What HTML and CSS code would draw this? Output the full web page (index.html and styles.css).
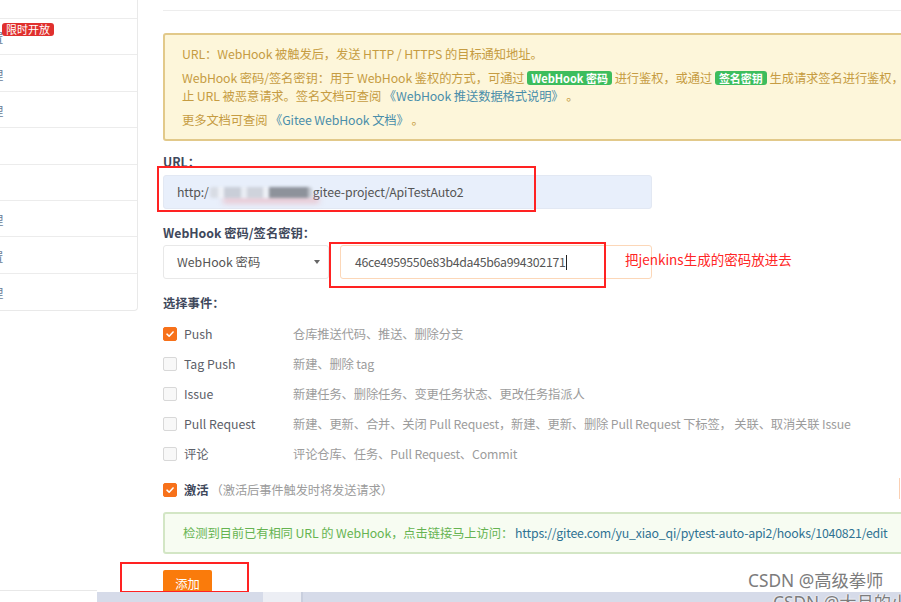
FILE: index.html
```html
<!DOCTYPE html>
<html lang="zh-CN">
<head>
<meta charset="utf-8">
<title>WebHook</title>
<link rel="stylesheet" href="styles.css">
</head>
<body>
<div class="page">
  <aside class="sidebar">
    <div class="menu-item first"></div>
    <div class="menu-item"><span class="menu-text">置</span><span class="badge">限时开放</span></div>
    <div class="menu-item"><span class="menu-text">理</span></div>
    <div class="menu-item"><span class="menu-text">理</span></div>
    <div class="menu-item"></div>
    <div class="menu-item"></div>
    <div class="menu-item"><span class="menu-text">理</span></div>
    <div class="menu-item"><span class="menu-text">置</span></div>
    <div class="menu-item last"><span class="menu-text">理</span></div>
  </aside>

  <main class="main">
    <div class="section-head"></div>

    <div class="notice">
      <p>URL：WebHook 被触发后，发送 HTTP / HTTPS 的目标通知地址。</p>
      <p>WebHook 密码/签名密钥：用于 WebHook 鉴权的方式，可通过 <span class="tag">WebHook 密码</span> 进行鉴权，或通过 <span class="tag">签名密钥</span> 生成请求签名进行鉴权，防<br>止 URL 被恶意请求。签名文档可查阅 <a class="link">《WebHook 推送数据格式说明》</a> 。</p>
      <p>更多文档可查阅 <a class="link">《Gitee WebHook 文档》</a> 。</p>
    </div>

    <div class="field-label">URL：</div>
    <div class="input url-input">http:/<span class="blurred"></span>gitee-project/ApiTestAuto2</div>

    <div class="field-label second">WebHook 密码/签名密钥：</div>
    <div class="secret-row">
      <div class="select">WebHook 密码<span class="caret"></span></div>
      <div class="input key-input">46ce4959550e83b4da45b6a994302171<span class="cursor"></span></div>
    </div>

    <div class="field-label events">选择事件：</div>
    <div class="events-list">
      <div class="event"><span class="cb checked"><svg viewBox="0 0 14 14"><path d="M3.5 7.2 L6 9.6 L10.6 4.6" fill="none" stroke="#fff" stroke-width="1.8" stroke-linecap="round" stroke-linejoin="round"/></svg></span><span class="ev-name">Push</span><span class="ev-desc">仓库推送代码、推送、删除分支</span></div>
      <div class="event"><span class="cb"></span><span class="ev-name">Tag Push</span><span class="ev-desc">新建、删除 tag</span></div>
      <div class="event"><span class="cb"></span><span class="ev-name">Issue</span><span class="ev-desc">新建任务、删除任务、变更任务状态、更改任务指派人</span></div>
      <div class="event"><span class="cb"></span><span class="ev-name">Pull Request</span><span class="ev-desc">新建、更新、合并、关闭 Pull Request，新建、更新、删除 Pull Request 下标签， 关联、取消关联 Issue</span></div>
      <div class="event"><span class="cb"></span><span class="ev-name">评论</span><span class="ev-desc">评论仓库、任务、Pull Request、Commit</span></div>
    </div>

    <div class="event activate"><span class="cb checked"><svg viewBox="0 0 14 14"><path d="M3.5 7.2 L6 9.6 L10.6 4.6" fill="none" stroke="#fff" stroke-width="1.8" stroke-linecap="round" stroke-linejoin="round"/></svg></span><span class="act-name">激活</span><span class="ev-desc act-desc">（激活后事件触发时将发送请求）</span></div>

    <div class="success">检测到目前已有相同 URL 的 WebHook，点击链接马上访问：<a class="link dark">https://gitee.com/yu_xiao_qi/pytest-auto-api2/hooks/1040821/edit</a></div>

    <button class="add-btn">添加</button>
  </main>
</div>

<div class="mark box1"></div>
<div class="mark box2"></div>
<div class="mark box3"></div>
<div class="annot">把jenkins生成的密码放进去</div>
<div class="edge-sliver"></div>

<div class="bottom-bar"><span class="bar-left"></span><span class="bar-a"></span><span class="bar-thumb"></span><span class="bar-b"></span></div>

<div class="watermark wm1">CSDN @高级拳师</div>
<div class="watermark wm2">CSDN @大月的小</div>
</body>
</html>
```
FILE: styles.css
```css
html, body {
  margin: 0;
  padding: 0;
  width: 901px;
  height: 602px;
  overflow: hidden;
  background: #fff;
}
body {
  font-family: "Noto Sans CJK SC", "Noto Sans", sans-serif;
  font-size: 12.3px;
  color: #555;
  position: relative;
}
.page {
  display: flex;
  align-items: flex-start;
  gap: 25px;
}
.sidebar {
  width: 137px;
  flex: none;
  border-right: 1px solid #e9e9e9;
  border-bottom: 1px solid #e9e9e9;
  border-bottom-right-radius: 4px;
  background: #fff;
}
.menu-item {
  position: relative;
  height: 36.4px;
  box-sizing: border-box;
  border-bottom: 1px solid #ececec;
  display: flex;
  align-items: center;
  overflow: hidden;
}
.menu-item.first { height: 19px; }
.menu-item.last { border-bottom: none; }
.menu-text {
  margin-left: -9px;
  color: #6a7d96;
  font-size: 12.3px;
  line-height: 14px;
  padding-top: 3px;
}
.badge {
  position: absolute;
  left: 2px;
  top: 4px;
  background: #e0302e;
  color: #fff;
  font-size: 11px;
  line-height: 13px;
  padding: 0 4px;
  border-radius: 3px;
}
.main {
  width: 770px;
  flex: none;
  display: flex;
  flex-direction: column;
  align-items: flex-start;
}
.section-head {
  align-self: stretch;
  height: 10px;
  border-bottom: 1px solid #ededed;
}
.notice {
  align-self: stretch;
  margin-top: 22px;
  background: #fdf6da;
  border: 2px solid #e2c98a;
  border-radius: 3px;
  padding: 10px 16px 10px 17px;
  color: #c69c42;
  height: 108px;
  box-sizing: border-box;
  letter-spacing: -0.1px;
}
.notice p {
  margin: 0 0 6px;
  line-height: 18px;
  white-space: nowrap;
}
.notice p:last-child { margin-bottom: 0; }
.tag {
  display: inline-block;
  background: #3dbd5d;
  color: #fff;
  font-weight: bold;
  font-size: 11px;
  line-height: 14px;
  padding: 0 4px;
  border-radius: 3px;
  letter-spacing: 0;
}
.link {
  color: #4a8eaa;
  text-decoration: none;
}
.link.dark {
  color: #2f7292;
  letter-spacing: -0.2px;
}
.field-label {
  margin-top: 13px;
  line-height: 16px;
  font-weight: bold;
  color: #40485b;
}
.field-label.second { margin-top: 16px; }
.field-label.events { margin-top: 16px; }
.input {
  box-sizing: border-box;
  height: 34px;
  line-height: 32px;
  border: 1px solid #e6e6e6;
  border-radius: 3px;
  padding-left: 13px;
  color: #555;
  white-space: nowrap;
}
.url-input {
  margin-top: 5px;
  width: 489px;
  background: #e8effb;
  border-color: #e2e8f3;
  display: flex;
  align-items: center;
  letter-spacing: -0.1px;
}
.blurred {
  display: inline-block;
  width: 102px;
  height: 11px;
  margin: 0 1px 0 1px;
  background: linear-gradient(90deg, #d8dce4 0 8%, #eef1f7 8% 14%, #c9ced8 14% 30%, #e9edf4 30% 36%, #cfd3dc 36% 52%, #edf0f6 52% 58%, #8d929b 58% 96%, #c2c6ce 96%);
  filter: blur(1.6px);
  border-radius: 3px;
  box-shadow: 10px 8px 5px -3px rgba(235, 160, 170, 0.6);
}
.secret-row {
  margin-top: 4px;
  display: flex;
  gap: 11px;
}
.select {
  box-sizing: border-box;
  width: 166px;
  height: 34px;
  border: 1px solid #e8e8e8;
  border-radius: 3px;
  padding: 0 8px 0 13px;
  display: flex;
  align-items: center;
  justify-content: space-between;
  color: #555;
}
.caret {
  width: 0;
  height: 0;
  border-left: 3.5px solid transparent;
  border-right: 3.5px solid transparent;
  border-top: 4px solid #666;
}
.key-input {
  width: 312px;
  border-color: #fcd7b8;
  padding-left: 14px;
  display: flex;
  align-items: center;
  letter-spacing: -0.3px;
}
.cursor {
  display: inline-block;
  width: 1px;
  height: 15px;
  background: #222;
  margin-left: 1px;
}
.events-list {
  margin-top: 8px;
  display: flex;
  flex-direction: column;
}
.event {
  height: 30px;
  display: flex;
  align-items: center;
  white-space: nowrap;
}
.cb {
  box-sizing: border-box;
  width: 14px;
  height: 14px;
  border: 1px solid #d8d8d8;
  background: #f8f8f8;
  border-radius: 2px;
  margin-right: 7px;
  flex: none;
  display: flex;
}
.cb.checked {
  background: #f7711a;
  border-color: #f7711a;
}
.cb svg {
  width: 12px;
  height: 12px;
}
.ev-name {
  width: 109px;
  color: #5c6068;
}
.ev-desc {
  color: #9c9c9c;
  letter-spacing: -0.15px;
}
.act-desc {
  margin-left: 2px;
}
.activate {
  margin-top: 6px;
}
.act-name {
  font-weight: bold;
  color: #40485b;
}
.success {
  align-self: stretch;
  margin-top: 7px;
  height: 42px;
  box-sizing: border-box;
  background: #f7fcf2;
  border: 2px solid #d3e6c5;
  border-radius: 3px;
  padding-left: 18px;
  display: flex;
  align-items: center;
  color: #66b451;
  white-space: nowrap;
  letter-spacing: -0.1px;
}
.success .link { margin-left: 2px; }
.add-btn {
  margin-top: 16px;
  width: 49px;
  height: 28px;
  border: none;
  border-radius: 2px;
  background: #fa7b0b;
  color: #fff;
  font-family: inherit;
  font-size: 12.3px;
  padding: 0;
  line-height: 24px;
  text-align: center;
}
.mark {
  position: absolute;
  border: 2px solid #f22;
  box-sizing: border-box;
}
.box1 { left: 157px; top: 166px; width: 379px; height: 46px; }
.box2 { left: 329px; top: 242px; width: 277px; height: 46px; }
.box3 { left: 120px; top: 562px; width: 129px; height: 31px; }
.annot {
  position: absolute;
  left: 625px;
  top: 250px;
  color: #ff2626;
  font-size: 13.5px;
  line-height: 18px;
}
.edge-sliver {
  position: absolute;
  left: 899px;
  top: 478px;
  width: 4px;
  height: 21px;
  border-left: 1px solid #fbd0b3;
  background: #fff;
}
.bottom-bar {
  position: absolute;
  left: 0;
  right: 0;
  top: 592px;
  height: 10px;
  display: flex;
}
.bar-left {
  width: 97px;
  border-top: 1px solid #e8e8e8;
  margin-top: -2px;
  background: #fff;
}
.bar-a {
  width: 166px;
  background: #d6dbe9;
}
.bar-thumb {
  width: 38px;
  background: #eceef4;
  border-right: 2px solid #c9cfde;
}
.bar-b {
  flex: 1;
  background: #d6dbe9;
}
.watermark {
  position: absolute;
  color: #7c7c7c;
  font-family: "Noto Sans", "Noto Sans CJK SC", sans-serif;
  font-size: 17.3px;
  line-height: 20px;
  white-space: nowrap;
  text-shadow: 0 0 2px #fff, 0 0 2px #fff;
}
.wm1 { left: 748px; top: 571px; }
.wm2 { left: 773px; top: 593px; }
```
